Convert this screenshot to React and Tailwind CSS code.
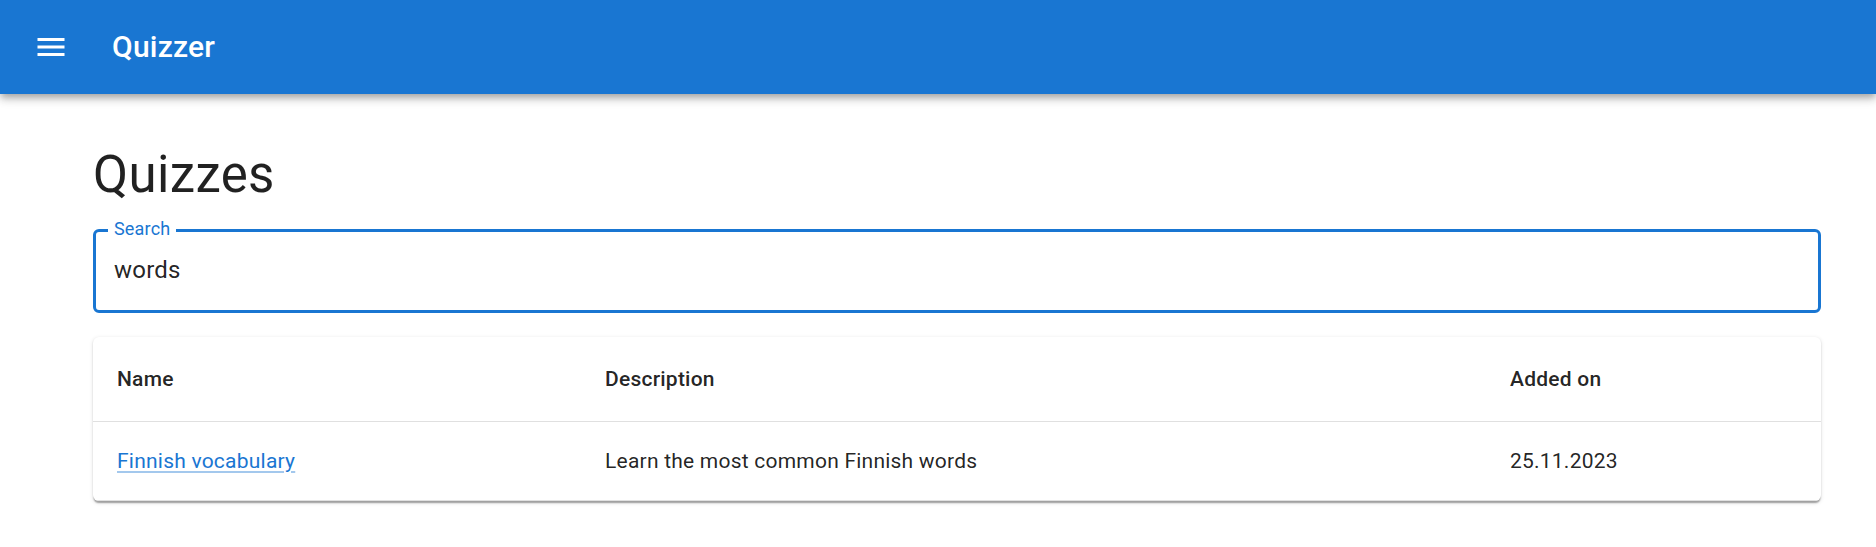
export default function App() {
  return (
    <div className="h-[547px] overflow-hidden bg-white font-['Roboto',sans-serif] text-[rgba(0,0,0,0.87)]">
      <header className="relative z-10 flex h-[94px] items-center bg-[#1976d2] pl-[33px] text-white shadow-[0_3px_6px_-1.5px_rgba(0,0,0,0.2),0_6px_7.5px_0_rgba(0,0,0,0.14),0_1.5px_15px_0_rgba(0,0,0,0.12)]">
        <svg viewBox="0 0 24 24" className="h-[36px] w-[36px]" fill="white">
          <path d="M3 18h18v-2H3zm0-5h18v-2H3zm0-7v2h18V6z" />
        </svg>
        <div className="ml-[43px] text-[30px] font-medium leading-[48px] tracking-[0.225px]">Quizzer</div>
      </header>

      <main className="pl-[93px] pr-[55px]">
        <h1 className="mt-[49px] text-[51px] font-normal leading-[63px] tracking-[0.375px]">Quizzes</h1>

        <div className="relative mt-[23px] h-[84px] rounded-[6px] border-[3px] border-[#1976d2]">
          <span className="absolute left-[12px] top-[-12px] bg-white px-[6px] text-[18px] leading-[18px] tracking-[0.17px] text-[#1976d2]">
            Search
          </span>
          <div className="pl-[18px] pt-[20px] text-[24px] leading-[36px] tracking-[0.225px]">words</div>
        </div>

        <div className="mt-[24px] overflow-hidden rounded-[6px] bg-white shadow-[0_3px_1.5px_-1.5px_rgba(0,0,0,0.2),0_1.5px_1.5px_0_rgba(0,0,0,0.14),0_1.5px_4.5px_0_rgba(0,0,0,0.12)]">
          <table className="w-full table-fixed border-collapse text-left text-[21px] tracking-[0.225px]">
            <colgroup>
              <col className="w-[488px]" />
              <col className="w-[905px]" />
              <col />
            </colgroup>
            <thead>
              <tr className="border-b border-[#e0e0e0]">
                <th className="p-[24px] font-medium leading-[36px]">Name</th>
                <th className="p-[24px] font-medium leading-[36px]">Description</th>
                <th className="p-[24px] font-medium leading-[36px]">Added on</th>
              </tr>
            </thead>
            <tbody>
              <tr className="border-b border-[#e0e0e0]">
                <td className="p-[24px] leading-[30px]">
                  <a href="#" className="text-[#1976d2] underline decoration-[rgba(25,118,210,0.4)] underline-offset-[3px]">
                    Finnish vocabulary
                  </a>
                </td>
                <td className="p-[24px] leading-[30px]">Learn the most common Finnish words</td>
                <td className="p-[24px] leading-[30px]">25.11.2023</td>
              </tr>
            </tbody>
          </table>
        </div>
      </main>
    </div>
  );
}
